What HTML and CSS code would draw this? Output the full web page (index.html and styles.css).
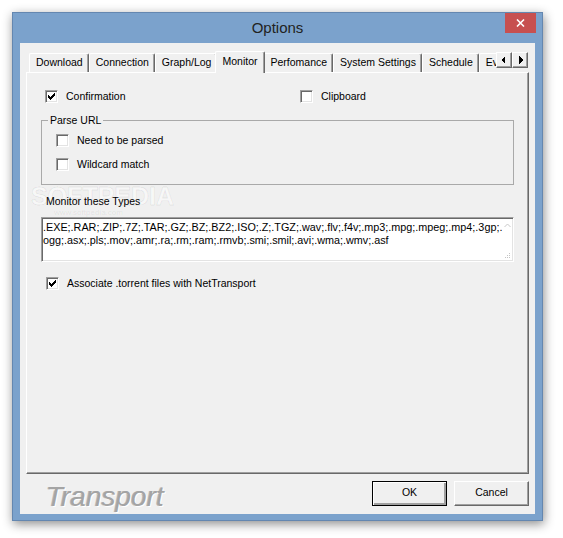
FILE: index.html
```html
<!DOCTYPE html>
<html>
<head>
<meta charset="utf-8">
<title>Options</title>
<link rel="stylesheet" href="styles.css">
</head>
<body>
<div class="window">
  <div class="titlebar">
    <span></span>
    <div class="title">Options</div>
    <div class="close">
      <svg width="9" height="8" viewBox="0 0 9 8"><path d="M1 0.5 L8 7.5 M8 0.5 L1 7.5" stroke="#fff" stroke-width="1.6" fill="none"/></svg>
    </div>
  </div>
  <div class="client">
    <div class="tabstrip">
      <div class="tabs">
        <div class="tab">Download</div>
        <div class="tab">Connection</div>
        <div class="tab">Graph/Log</div>
        <div class="tab active">Monitor</div>
        <div class="tab">Perfomance</div>
        <div class="tab">System Settings</div>
        <div class="tab">Schedule</div>
        <div class="tab">Events</div>
      </div>
      <div class="scrollers">
        <div class="sbtn"><svg width="14" height="14" viewBox="0 0 14 14"><path d="M8 3 L8 11 L4 7 Z" fill="#000" shape-rendering="crispEdges"/></svg></div>
        <div class="sbtn"><svg width="14" height="14" viewBox="0 0 14 14"><path d="M6 3 L6 11 L10 7 Z" fill="#000" shape-rendering="crispEdges"/></svg></div>
      </div>
    </div>
    <div class="panel">
      <div class="watermark">SOFTPEDIA</div>
      <div class="watermark-url">www.softpedia.com</div>
      <div class="row-top">
        <div class="check"><span class="box"><svg class="tick" width="13" height="13" viewBox="0 0 13 13"><path d="M9 3h1v1h-1z M8 4h2v1h-2z M3 5h1v1h-1z M7 5h3v1h-3z M3 6h2v1h-2z M6 6h3v1h-3z M3 7h5v1h-5z M4 8h3v1h-3z M5 9h1v1h-1z" fill="#000" shape-rendering="crispEdges"/></svg></span>Confirmation</div>
        <div class="check"><span class="box"></span>Clipboard</div>
      </div>
      <fieldset class="group">
        <legend>Parse URL</legend>
        <div class="check"><span class="box"></span>Need to be parsed</div>
        <div class="check"><span class="box"></span>Wildcard match</div>
      </fieldset>
      <div class="types-label">Monitor these Types</div>
      <div class="textbox">
        <div class="textbox-text">.EXE;.RAR;.ZIP;.7Z;.TAR;.GZ;.BZ;.BZ2;.ISO;.Z;.TGZ;.wav;.flv;.f4v;.mp3;.mpg;.mpeg;.mp4;.3gp;.<br>ogg;.asx;.pls;.mov;.amr;.ra;.rm;.ram;.rmvb;.smi;.smil;.avi;.wma;.wmv;.asf</div>
        <div class="textbox-scroll">
          <svg width="7" height="5" viewBox="0 0 7 5"><path d="M0.5 4 L3.5 1 L6.5 4" stroke="#c8c8c8" stroke-width="1" fill="none"/></svg>
          <svg width="7" height="7" viewBox="0 0 7 7"><path d="M5 1h1v1h-1z M3 3h1v1h-1z M5 3h1v1h-1z M1 5h1v1h-1z M3 5h1v1h-1z M5 5h1v1h-1z" fill="#c4c4c4" shape-rendering="crispEdges"/></svg>
        </div>
      </div>
      <div class="check assoc"><span class="box"><svg class="tick" width="13" height="13" viewBox="0 0 13 13"><path d="M9 3h1v1h-1z M8 4h2v1h-2z M3 5h1v1h-1z M7 5h3v1h-3z M3 6h2v1h-2z M6 6h3v1h-3z M3 7h5v1h-5z M4 8h3v1h-3z M5 9h1v1h-1z" fill="#000" shape-rendering="crispEdges"/></svg></span>Associate .torrent files with NetTransport</div>
    </div>
    <div class="footer">
      <div class="brand">Transport</div>
      <div class="buttons">
        <div class="btn default">OK</div>
        <div class="btn">Cancel</div>
      </div>
    </div>
  </div>
</div>
</body>
</html>
```

FILE: styles.css
```css
* { box-sizing: border-box; }
html, body { margin: 0; }
body {
  width: 563px;
  height: 538px;
  overflow: hidden;
  background: #ffffff;
  padding: 12px 0 0 12px;
  font-family: "Liberation Sans", Arial, sans-serif;
  font-size: 10.5px;
  color: #000;
}

.window {
  width: 531px;
  height: 509px;
  background: #7ba2cc;
  border: 1px solid #6487b0;
  box-shadow: 1px 3px 10px rgba(0, 0, 0, 0.45);
  display: flex;
  flex-direction: column;
}

.titlebar {
  height: 30px;
  display: grid;
  grid-template-columns: 1fr auto 1fr;
  align-items: start;
}
.title {
  font-size: 15px;
  line-height: 30px;
  color: #222;
}
.close {
  justify-self: end;
  width: 31px;
  height: 20px;
  margin-right: 6px;
  background: #c75050;
  display: flex;
  align-items: center;
  justify-content: center;
}
.close svg { display: block; }

.client {
  flex: 1;
  margin: 0 7px 6px 7px;
  background: #f0f0f0;
  padding: 8px 6px 0 6px;
  display: flex;
  flex-direction: column;
}

.tabstrip {
  height: 21px;
  display: flex;
  padding: 0 1px 0 2px;
  position: relative;
  z-index: 1;
}
.tabs {
  flex: 1;
  height: 22px;
  display: flex;
  align-items: flex-end;
  overflow: hidden;
  padding-left: 1px;
}
.tab {
  flex: none;
  height: 19px;
  margin-bottom: 1px;
  padding: 0 5px 0 6px;
  line-height: 17px;
  background: #f0f0f0;
  border-top: 1px solid #ffffff;
  border-left: 1px solid #ffffff;
  border-right: 1px solid #696969;
  box-shadow: inset -1px 0 0 #a0a0a0;
  border-radius: 2px 2px 0 0;
  white-space: nowrap;
}
.tab.active {
  height: 22px;
  margin: 0 -2px;
  padding: 1px 7px 0 6px;
  position: relative;
  z-index: 2;
}
.scrollers {
  display: flex;
  margin-top: 1px;
  align-self: flex-start;
}
.sbtn {
  width: 16px;
  height: 16px;
  background: #f0f0f0;
  border: 1px solid;
  border-color: #ffffff #696969 #696969 #ffffff;
  box-shadow: inset -1px -1px 0 #a0a0a0;
}
.sbtn svg { display: block; }

.panel {
  flex: 1;
  position: relative;
  border-top: 1px solid #ffffff;
  border-left: 1px solid #ffffff;
  border-right: 1px solid #696969;
  border-bottom: 1px solid #696969;
  box-shadow: inset -1px -1px 0 #a0a0a0;
  padding: 17px 14px 0 14px;
  display: flex;
  flex-direction: column;
  align-items: stretch;
}

.watermark {
  position: absolute;
  left: 4px;
  top: 109px;
  font-size: 25px;
  font-weight: bold;
  color: rgba(255, 255, 255, 0.5);
  -webkit-text-stroke: 1px rgba(0, 0, 0, 0.07);
  pointer-events: none;
}
.watermark-url {
  position: absolute;
  left: 27px;
  top: 135px;
  font-size: 8px;
  line-height: 9px;
  color: rgba(0, 0, 0, 0.08);
  z-index: 3;
  pointer-events: none;
}

.check {
  display: flex;
  align-items: center;
  height: 13px;
  line-height: 13px;
  white-space: nowrap;
}
.box {
  flex: none;
  width: 13px;
  height: 13px;
  margin-right: 8px;
  background: #ffffff;
  border: 1px solid;
  border-color: #a0a0a0 #ffffff #ffffff #a0a0a0;
  box-shadow: inset 1px 1px 0 #696969, inset -1px -1px 0 #e3e3e3;
  position: relative;
}
.tick {
  position: absolute;
  left: -1px;
  top: -1px;
  display: block;
}

.row-top {
  display: grid;
  grid-template-columns: 255px auto;
  padding-left: 4px;
}

.group {
  margin: 11px 0 0 0;
  min-width: 0;
  border: 1px solid #a9a9a9;
  padding: 7px 14px 13px 14px;
  display: flex;
  flex-direction: column;
  gap: 11px;
}
.group legend {
  margin-left: -8px;
  padding: 0 2px;
  line-height: 13px;
}

.types-label {
  margin: 10px 0 0 5px;
  line-height: 13px;
  position: relative;
}

.textbox {
  margin-top: 9px;
  height: 45px;
  background: #ffffff;
  border: 1px solid;
  border-color: #a0a0a0 #ffffff #ffffff #a0a0a0;
  box-shadow: inset 1px 1px 0 #696969, inset -1px -1px 0 #e3e3e3;
  display: flex;
  padding: 2px 1px 1px 1px;
}
.textbox-text {
  flex: 1;
  min-width: 0;
  overflow: hidden;
  white-space: nowrap;
  font-size: 10.8px;
  line-height: 13px;
  padding-top: 1px;
}
.textbox-scroll {
  flex: none;
  width: 9px;
  display: flex;
  flex-direction: column;
  justify-content: space-between;
  align-items: center;
  padding: 3px 0 1px 0;
}
.textbox-scroll svg { display: block; }

.assoc {
  margin: 15px 0 0 5px;
}

.footer {
  height: 40px;
  display: flex;
  align-items: flex-start;
  justify-content: space-between;
}
.brand {
  margin: 8px 0 0 20px;
  font-size: 28px;
  line-height: 30px;
  font-style: italic;
  color: #a4a4a4;
  text-shadow: 1px 1px 0 #ffffff, -1px 0 0 #b8b8b8;
}
.buttons {
  display: flex;
  gap: 7px;
  margin-top: 7px;
}
.btn {
  width: 75px;
  height: 25px;
  line-height: 21px;
  text-align: center;
  background: #f0f0f0;
  border: 1px solid;
  border-color: #ffffff #696969 #696969 #ffffff;
  box-shadow: inset -1px -1px 0 #a0a0a0;
}
.btn.default {
  border: 1px solid #000000;
  box-shadow: inset 1px 1px 0 #ffffff, inset -2px -2px 0 #a0a0a0, inset -1px -1px 0 #696969;
}
```
